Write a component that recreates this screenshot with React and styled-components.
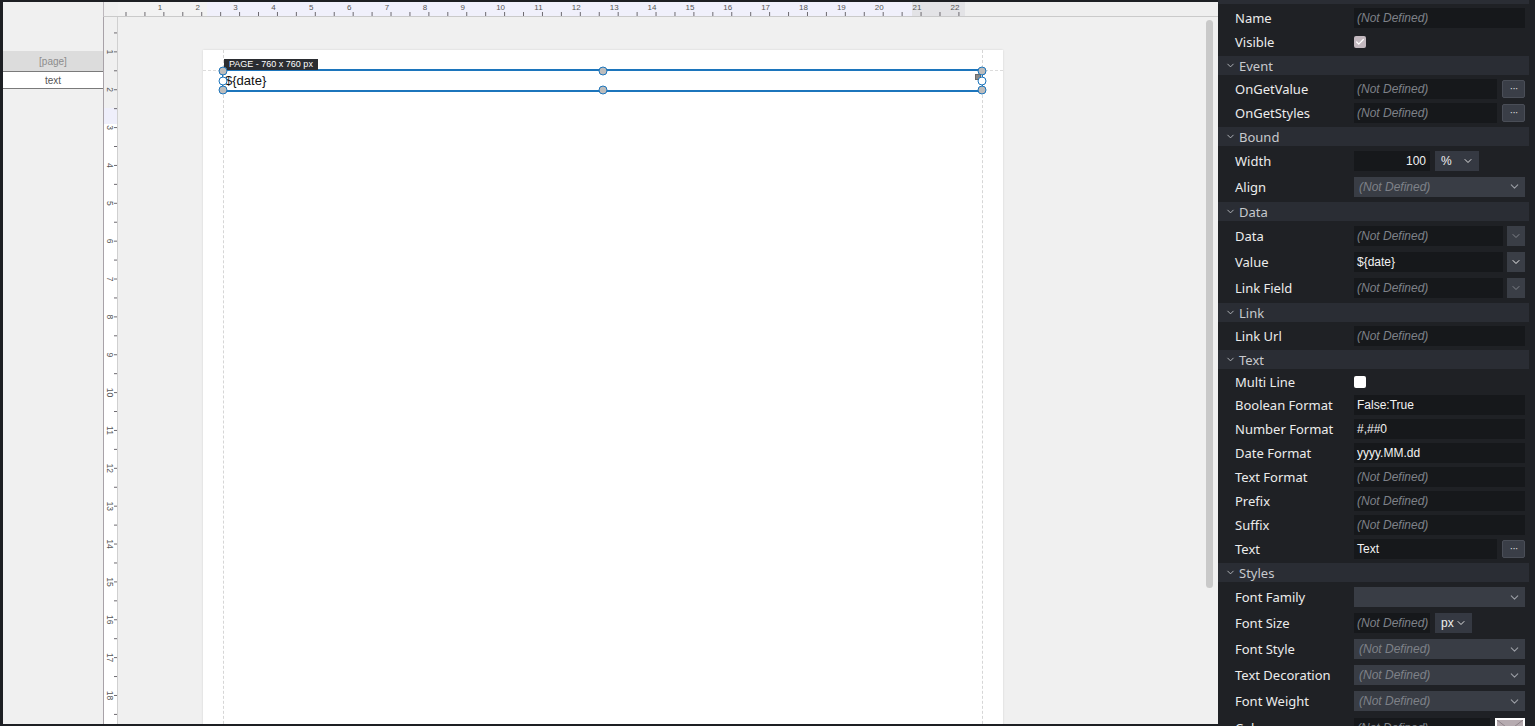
import React from 'react'
import styled, { createGlobalStyle } from 'styled-components'
import { ChevronDown, Check } from 'lucide-react'

const CM = 37.86

const sections = [
  {
    title: 'Basic',
    rows: [
      { label: 'Name', kind: 'text' },
      { label: 'Visible', kind: 'check', checked: true },
    ],
  },
  {
    title: 'Event',
    rows: [
      { label: 'OnGetValue', kind: 'text', more: true },
      { label: 'OnGetStyles', kind: 'text', more: true },
    ],
  },
  {
    title: 'Bound',
    rows: [
      { label: 'Width', kind: 'unit', value: '100', unit: '%', unitWidth: 44, h: 25 },
      { label: 'Align', kind: 'select', h: 27 },
    ],
  },
  {
    title: 'Data',
    rows: [
      { label: 'Data', kind: 'combo', h: 26 },
      { label: 'Value', kind: 'combo', value: '${date}', h: 26 },
      { label: 'Link Field', kind: 'combo', h: 26 },
    ],
  },
  {
    title: 'Link',
    rows: [{ label: 'Link Url', kind: 'text' }],
  },
  {
    title: 'Text',
    rows: [
      { label: 'Multi Line', kind: 'check', h: 22 },
      { label: 'Boolean Format', kind: 'text', value: 'False:True' },
      { label: 'Number Format', kind: 'text', value: '#,##0' },
      { label: 'Date Format', kind: 'text', value: 'yyyy.MM.dd' },
      { label: 'Text Format', kind: 'text' },
      { label: 'Prefix', kind: 'text' },
      { label: 'Suffix', kind: 'text' },
      { label: 'Text', kind: 'text', value: 'Text', more: true },
    ],
  },
  {
    title: 'Styles',
    rows: [
      { label: 'Font Family', kind: 'select', value: '', h: 26 },
      { label: 'Font Size', kind: 'unit', unit: 'px', unitWidth: 37, h: 26 },
      { label: 'Font Style', kind: 'select', h: 26 },
      { label: 'Text Decoration', kind: 'select', h: 26 },
      { label: 'Font Weight', kind: 'select', h: 26 },
      { label: 'Color', kind: 'color', h: 26 },
    ],
  },
]

const GlobalStyle = createGlobalStyle`
  html, body {
    margin: 0;
    height: 100%;
    overflow: hidden;
    background: #1d1f23;
    font-family: "Liberation Sans", Arial, sans-serif;
  }
  * { box-sizing: border-box; }
`

function TopRuler() {
  const nums = Array.from({ length: 22 }, (_, i) => i + 1)
  const ticks = Array.from({ length: 45 }, (_, i) => i)
  return (
    <svg width="1100" height="14">
      {nums.map(n => (
        <text key={n} x={6 + n * CM - 2} y="8" fontSize="8" fill="#555" textAnchor="middle" fontFamily="Liberation Sans, sans-serif">
          {n}
        </text>
      ))}
      {ticks.map(t => (
        <line key={t} x1={8 + t * CM / 2} x2={8 + t * CM / 2} y1="10" y2="14" stroke="#6d6a70" strokeWidth="1" />
      ))}
    </svg>
  )
}

function SideRuler() {
  const nums = Array.from({ length: 18 }, (_, i) => i + 1)
  const ticks = Array.from({ length: 37 }, (_, i) => i + 1)
  return (
    <svg width="14" height="707">
      {nums.map(n => {
        const y = n * CM - 3
        return (
          <text key={n} x="0" y="0" fontSize="8.5" fill="#555" textAnchor="middle" fontFamily="Liberation Sans, sans-serif" transform={`translate(3 ${y}) rotate(90)`}>
            {n}
          </text>
        )
      })}
      {ticks.map(t => (
        <line key={t} x1="10" x2="14" y1={-3 + t * CM / 2} y2={-3 + t * CM / 2} stroke="#6d6a70" strokeWidth="1" />
      ))}
    </svg>
  )
}

function Control({ row }) {
  const empty = row.value === undefined
  switch (row.kind) {
    case 'check':
      return <CheckBox $checked={row.checked}>{row.checked && <Check size={10} strokeWidth={3} color="#fff" />}</CheckBox>
    case 'select':
      return (
        <Select>
          <ValueText $empty={empty}>{empty ? '(Not Defined)' : row.value}</ValueText>
          <ChevronDown size={13} color="#9a9da4" />
        </Select>
      )
    case 'unit':
      return (
        <Inline>
          <Field $width={76} $right={!empty}>
            <ValueText $empty={empty}>{empty ? '(Not Defined)' : row.value}</ValueText>
          </Field>
          <UnitSelect $width={row.unitWidth}>
            <span>{row.unit}</span>
            <ChevronDown size={12} color="#e0e0e0" />
          </UnitSelect>
        </Inline>
      )
    case 'combo':
      return (
        <Inline>
          <Field $width={149}>
            <ValueText $empty={empty}>{empty ? '(Not Defined)' : row.value}</ValueText>
          </Field>
          <DropButton>
            <ChevronDown size={12} color={empty ? '#80838a' : '#f0f0f0'} />
          </DropButton>
        </Inline>
      )
    case 'color':
      return (
        <Inline>
          <Field $width={136}>
            <ValueText $empty>(Not Defined)</ValueText>
          </Field>
          <Swatch>
            <svg width="26" height="20" viewBox="0 0 26 20">
              <path d="M0 0 L13 10 L26 0" stroke="#8d8288" fill="none" strokeWidth="1" />
            </svg>
          </Swatch>
        </Inline>
      )
    default:
      return (
        <Inline>
          <Field $width={row.more ? 143 : 171}>
            <ValueText $empty={empty}>{empty ? '(Not Defined)' : row.value}</ValueText>
          </Field>
          {row.more && <MoreButton>···</MoreButton>}
        </Inline>
      )
  }
}

export default function App() {
  return (
    <>
      <GlobalStyle />
      <Frame>
        <Main>
          <Outline>
            <OutlineRow $kind="page">[page]</OutlineRow>
            <OutlineRow $kind="item">text</OutlineRow>
          </Outline>
          <Workspace>
            <Corner />
            <RulerTop>
              <TopRuler />
            </RulerTop>
            <RulerSide>
              <SideRuler />
            </RulerSide>
            <Canvas>
              <Page>
                <PageBody>
                  <Band>
                    <PageTag>PAGE - 760 x 760 px</PageTag>
                    ${'{date}'}
                    <Selection>
                      <Handle $x="0" $y="0" />
                      <Handle $x="0" $y="50%" $hollow />
                      <Handle $x="0" $y="100%" />
                      <Handle $x="50%" $y="0" />
                      <Handle $x="50%" $y="100%" />
                      <Handle $x="100%" $y="0" />
                      <Handle $x="100%" $y="50%" $hollow />
                      <Handle $x="100%" $y="100%" />
                      <Grip />
                    </Selection>
                  </Band>
                </PageBody>
              </Page>
              <ScrollThumb />
            </Canvas>
          </Workspace>
        </Main>

        <Panel>
          <PropList>
            {sections.map(s => (
              <React.Fragment key={s.title}>
                <SectionHeader>
                  <ChevronDown size={11} color="#b9bcc2" strokeWidth={2} />
                  {s.title}
                </SectionHeader>
                {s.rows.map(r => (
                  <PropRow key={r.label} $h={r.h || 24}>
                    <PropLabel>{r.label}</PropLabel>
                    <Control row={r} />
                  </PropRow>
                ))}
              </React.Fragment>
            ))}
          </PropList>
        </Panel>
      </Frame>
    </>
  )
}

// styles ===========
const dots = `
  background-color: #f0f0f0;
  background-image: radial-gradient(circle, #e8e8e8 0.6px, transparent 0.7px);
  background-size: 4px 4px;
`

const Frame = styled.div`
  display: flex;
  height: 726px;
  width: 1535px;
`

const Main = styled.div`
  flex: 1;
  display: flex;
  padding: 2px 0 2px 3px;
  min-width: 0;
`

const Outline = styled.div`
  width: 100px;
  background: #f0f0f0;
  padding-top: 49px;
  font-size: 10px;
`

const OutlineRow = styled.div`
  height: ${p => (p.$kind === 'page' ? '21px' : '17px')};
  display: flex;
  align-items: center;
  justify-content: center;
  color: ${p => (p.$kind === 'page' ? '#8c8c8c' : '#555')};
  background: ${p => (p.$kind === 'page' ? '#dcdcdc' : '#fff')};
  border-bottom: 1px solid #7a7a7a;
`

const Workspace = styled.div`
  flex: 1;
  display: grid;
  grid-template-columns: 15px 1fr;
  grid-template-rows: 15px 1fr;
  min-width: 0;
`

const Corner = styled.div`
  ${dots};
  border-bottom: 1px solid #cacaca;
  border-left: 1px solid #bdb8bd;
`

const RulerTop = styled.div`
  border-bottom: 1px solid #cacaca;
  overflow: hidden;
  background: linear-gradient(
    to right,
    #f2f2f2 0 89px,
    #f0f0fb 89px 794px,
    #e3e3e6 794px 847px,
    #efefef 847px
  );
  svg { display: block; }
`

const RulerSide = styled.div`
  border-left: 1px solid #a8a2a8;
  border-right: 1px solid #d0d0d0;
  overflow: hidden;
  background: linear-gradient(
    to bottom,
    #f0f0f0 0 91px,
    #efeffb 91px 107px,
    #ffffff 107px
  );
  svg { display: block; }
`

const Canvas = styled.div`
  ${dots};
  position: relative;
  overflow: hidden;
  padding: 33px 0 0 85px;
`

const ScrollThumb = styled.div`
  position: absolute;
  top: 3px;
  right: 5px;
  width: 7px;
  height: 568px;
  border-radius: 4px;
  background: #c9c9c9;
`

const Page = styled.div`
  position: relative;
  width: 800px;
  height: 800px;
  background: #fff;
  box-shadow: 0 0 2px rgba(0, 0, 0, 0.12);
  padding-top: 21px;

  &::before {
    content: '';
    position: absolute;
    top: 20px;
    left: 0;
    right: 0;
    border-top: 1px dashed #dcdcdc;
  }
`

const PageBody = styled.div`
  position: relative;
  margin: 0 20px;
  height: 100%;
  margin-top: -21px;
  padding-top: 21px;
  border-left: 1px dashed #d6d6d6;
  border-right: 1px dashed #d6d6d6;
`

const Band = styled.div`
  position: relative;
  height: 19px;
  line-height: 19px;
  padding-left: 1px;
  font-size: 13px;
  color: #111;
  background: #fff;
`

const PageTag = styled.div`
  position: absolute;
  left: 0;
  bottom: calc(100% + 1px);
  z-index: 2;
  height: 11px;
  line-height: 11px;
  padding: 0 5px;
  background: #2b2d31;
  color: #fff;
  font-size: 9px;
  white-space: nowrap;
`

const Selection = styled.div`
  position: absolute;
  top: -2px;
  bottom: -2px;
  left: -2px;
  right: -1px;
  border-top: 2px solid #1c75bc;
  border-bottom: 2px solid #1c75bc;
  border-left: 1px solid #1c75bc;
  border-right: 1px solid #1c75bc;
  pointer-events: none;
`

const Handle = styled.span`
  position: absolute;
  left: ${p => p.$x};
  top: ${p => p.$y};
  width: 9px;
  height: 9px;
  border-radius: 50%;
  transform: translate(-50%, -50%);
  background: ${p => (p.$hollow ? '#fff' : '#bcbcbc')};
  border: 1.5px solid #1c75bc;
  z-index: 3;
`

const Grip = styled.span`
  position: absolute;
  right: 1px;
  top: 3px;
  width: 6px;
  height: 6px;
  background: #8a8a8a;
  border: 1px solid #6a6a6a;
`

const Panel = styled.div`
  width: 317px;
  height: 726px;
  background: #1f2125;
  overflow: hidden;
  padding-right: 6px;
`

const PropList = styled.div`
  margin-top: -17px;
`

const SectionHeader = styled.div`
  height: 19px;
  margin: 2px 0;
  background: #2a2d34;
  display: flex;
  align-items: center;
  gap: 3px;
  padding-left: 7px;
  color: #c7c9cd;
  font-family: "Noto Sans", sans-serif;
  font-size: 13px;
`

const PropRow = styled.div`
  height: ${p => p.$h}px;
  display: grid;
  grid-template-columns: 119px 171px;
  align-items: center;
  padding-left: 17px;
`

const PropLabel = styled.div`
  color: #ececec;
  font-family: "Noto Sans", sans-serif;
  font-size: 13px;
  white-space: nowrap;
`

const Inline = styled.div`
  display: flex;
  align-items: center;
  gap: 5px;
`

const Field = styled.div`
  width: ${p => p.$width}px;
  height: 20px;
  background: #16181b;
  display: flex;
  align-items: center;
  justify-content: ${p => (p.$right ? 'flex-end' : 'flex-start')};
  padding: 0 4px 0 3px;
`

const ValueText = styled.span`
  font-family: "Liberation Sans", Arial, sans-serif;
  font-size: 12px;
  font-style: ${p => (p.$empty ? 'italic' : 'normal')};
  color: ${p => (p.$empty ? '#7e8188' : '#f2f2f2')};
  white-space: nowrap;
`

const Select = styled.div`
  width: 171px;
  height: 20px;
  background: #393d45;
  display: flex;
  align-items: center;
  justify-content: space-between;
  padding: 0 4px 0 5px;
`

const UnitSelect = styled.div`
  width: ${p => p.$width}px;
  height: 20px;
  background: #353942;
  display: flex;
  align-items: center;
  justify-content: space-between;
  padding: 0 5px 0 6px;
  color: #f0f0f0;
  font-size: 12px;
`

const DropButton = styled.div`
  width: 18px;
  height: 20px;
  margin-left: -1px;
  background: #3a3e46;
  display: flex;
  align-items: center;
  justify-content: center;
`

const MoreButton = styled.div`
  width: 23px;
  height: 18px;
  background: #3a3e47;
  border: 1px solid #4a4e57;
  border-radius: 2px;
  color: #d8d8d8;
  font-size: 11px;
  line-height: 14px;
  text-align: center;
  letter-spacing: -1px;
`

const CheckBox = styled.div`
  width: 12px;
  height: 12px;
  border-radius: 2px;
  background: ${p => (p.$checked ? '#c3b8bf' : '#ffffff')};
  display: flex;
  align-items: center;
  justify-content: center;
`

const Swatch = styled.div`
  width: 30px;
  height: 24px;
  margin-top: 4px;
  border: 2px solid #fff;
  background: #b6abb0;
  svg { display: block; }
`
